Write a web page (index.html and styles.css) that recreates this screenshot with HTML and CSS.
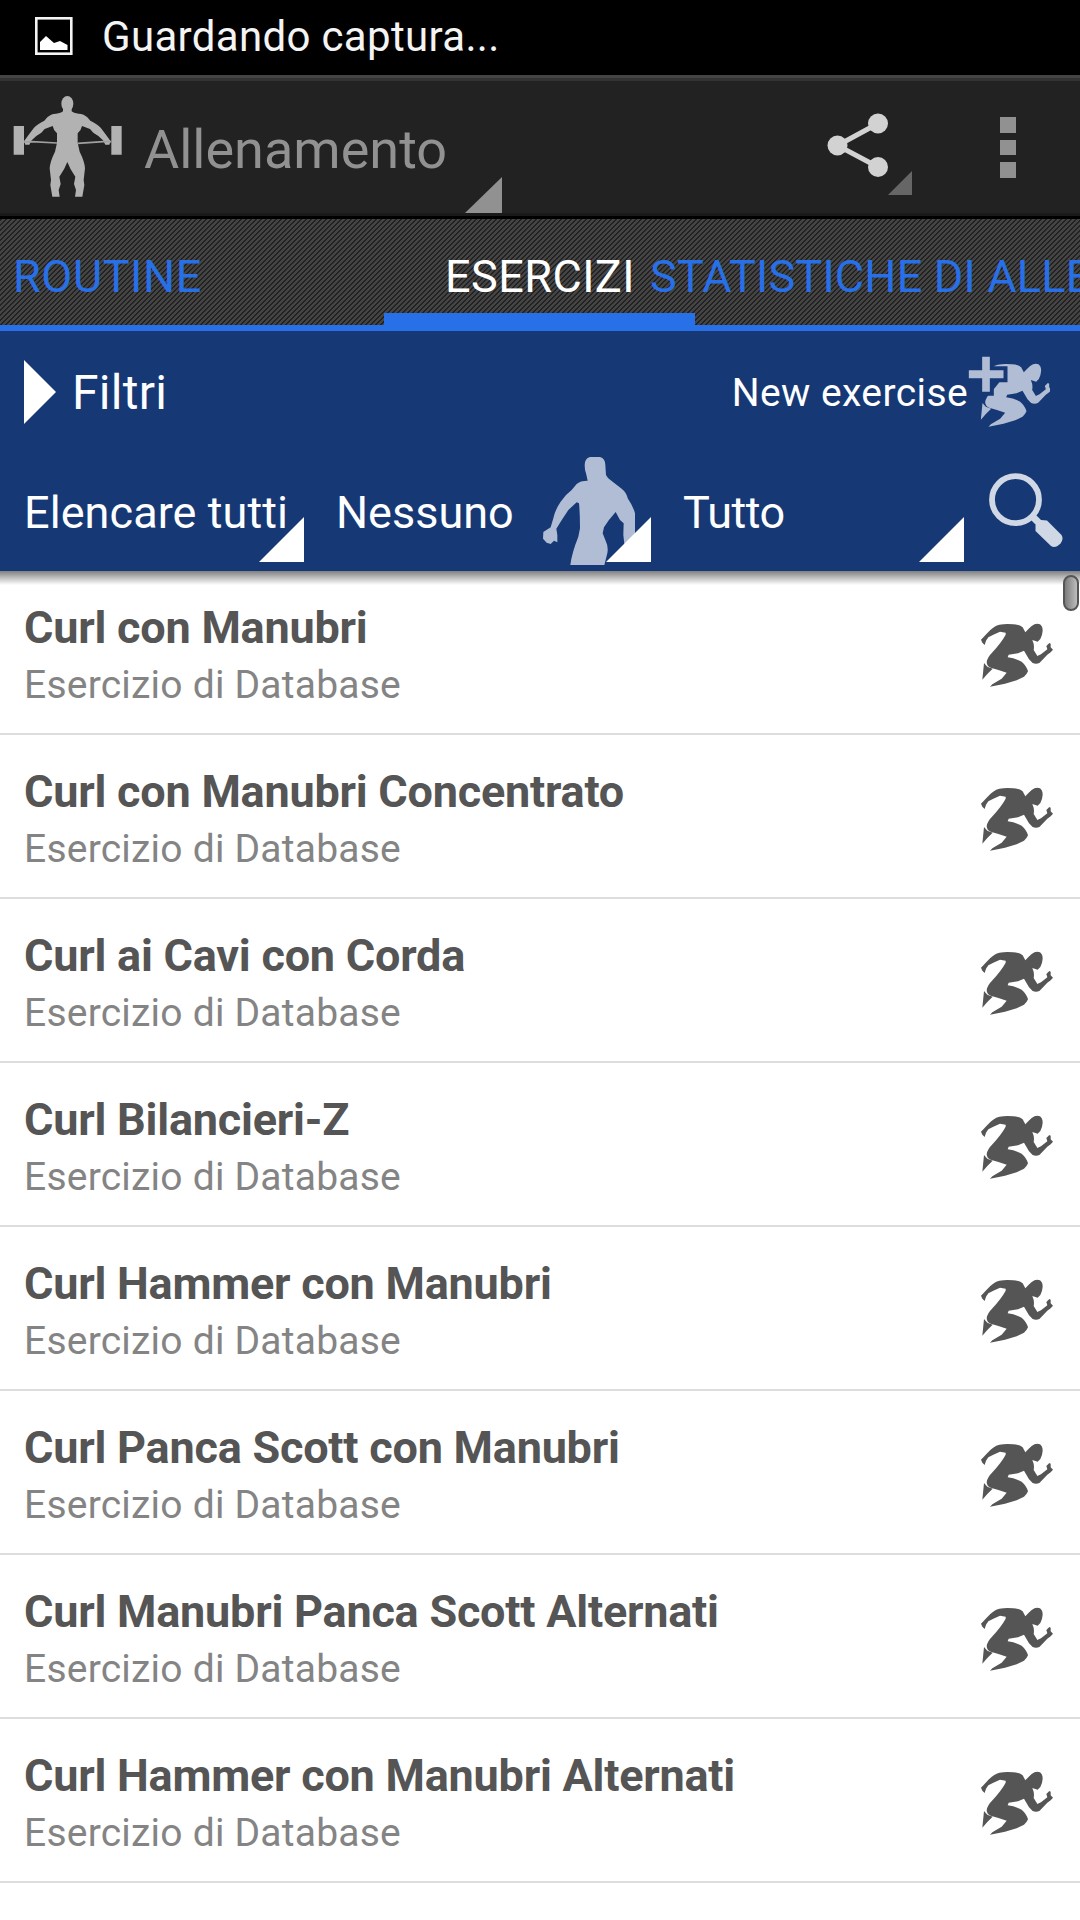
FILE: index.html
```html
<!DOCTYPE html>
<html lang="it">
<head>
<meta charset="utf-8">
<title>Allenamento</title>
<link rel="stylesheet" href="styles.css">
</head>
<body>
<svg class="defs" width="0" height="0">
  <defs>
    <symbol id="runner" viewBox="0 0 360 330">
      <path d="M63 119L73 109L80 101Q100 78 118 74Q140 70 160 73Q180 74 188 82L196 97Q208 84 215 78Q228 68 240 73Q248 79 248 92Q247 106 241 117L233 125L217 120Q224 135 221 150L229 163L232 168L243 163L262 148L259 138L268 129L272 131L272 142L279 149L272 157L262 164L239 188Q229 194 218 189L207 178L192 152L174 160L146 164L143 172Q170 176 185 185Q200 198 204 214Q201 222 192 230L170 241L135 251L90 260L97 253L125 236L140 218Q118 210 92 203Q80 198 80 186Q82 172 96 158Q124 128 137 104L137 98L120 95L100 104L85 112L78 122L74 135L67 128Z"/>
      <path d="M72 189L82 200L98 206L82 222L67 239Z"/>
    </symbol>
  </defs>
</svg>
<header class="status">
  <svg class="status-icon" viewBox="0 0 40 40" width="40" height="40"><rect x="2.3" y="2.3" width="35" height="35.4" fill="none" stroke="#f4f4f4" stroke-width="2.6"/><path d="M6 34V26L12 20L20 27L26 25L33.5 29V34Z" fill="#fff"/></svg>
  <span class="t-status">Guardando captura...</span>
</header>
<div class="actionbar">
  <svg class="logo" viewBox="0 0 420 390" width="140" height="130">
    <g fill="#b2b2b2">
      <ellipse cx="202" cy="71" rx="18" ry="23"/>
      <path d="M189 84V94Q184 99 168 101Q152 102 142 112L133 122Q112 132 102 143Q85 165 72 184L76 194L88 194L95 181Q110 165 124 158L134 147L158 138Q160 150 171 160V188L165 215Q150 245 149 265L153 300L151 315L157 350H179L176 330L182 312L178 290Q194 268 202 246Q210 268 226 290L222 312L228 330L225 350H247L253 315L251 300L255 265Q254 245 239 215L233 188V160Q244 150 246 138L270 147L280 158Q294 165 309 181L316 194L328 194L332 184Q319 165 302 143Q292 132 271 122L262 112Q252 102 236 101Q220 99 215 94V84Z"/>
      <path d="M41 138H72V224H41ZM334 138H365V224H334Z"/>
    </g>
    <path d="M72 186L95 185L171 189M233 190L310 185H334" fill="none" stroke="#a0a0a0" stroke-width="5"/>
  </svg>
  <div class="title"><span class="t-title">Allenamento</span><svg class="corner" viewBox="0 0 37 36" width="37" height="36"><path d="M37 0V36H0Z" fill="#919191"/></svg></div>
  <svg class="share" viewBox="0 0 90 90" width="90" height="90"><g fill="#d2d2d2"><circle cx="53" cy="23.500" r="10"/><circle cx="12.500" cy="45.500" r="10"/><circle cx="53" cy="67" r="10"/></g><path d="M53 23.500L12.500 45.500L53 67" fill="none" stroke="#d2d2d2" stroke-width="5"/><path d="M87 71V95H63Z" fill="#666"/></svg>
  <div class="overflow"><i></i><i></i><i></i></div>
</div>
<nav class="tabs">
  <span class="tab tab-routine">ROUTINE</span>
  <span class="tab tab-esercizi">ESERCIZI</span>
  <span class="tab tab-stat">STATISTICHE DI ALLENAMENTO</span>
</nav>
<section class="filters">
  <div class="filter-head">
    <svg viewBox="0 0 32 64" width="32" height="64"><path d="M0 0L32 32L0 64Z" fill="#fff"/></svg>
    <span class="t-filtri">Filtri</span>
    <span class="t-new">New exercise</span>
    <svg class="new-icon" viewBox="25 0 245 330" width="82" height="110"><use href="#runner" x="-4" y="0" width="360" height="330" fill="#b1bdd5"/><path d="M67 50H90V91H131V115H90V155H67V115H27V91H67Z" fill="#b1bdd5" stroke="#163975" stroke-width="24" paint-order="stroke"/></svg>
  </div>
  <div class="filter-row">
    <div class="spin spin-list"><span class="t-f t-list">Elencare tutti</span><svg class="tri" viewBox="0 0 45 45" width="45" height="45"><path d="M45 0V45H0Z" fill="#fff"/></svg></div>
    <span class="t-f t-none">Nessuno</span>
    <div class="spin spin-body"><svg viewBox="39 51 324 324" width="108" height="108"><path d="M180 51H210Q226 56 226 75L228 105Q232 115 245 123L275 146Q290 158 293 175Q310 200 315 220V300L284 320L280 285L281 250L270 240L257 216Q235 240 222 262L218 280L226 300Q236 320 232 340L223 375H121Q125 340 145 290L150 265Q150 220 147 190L140 187L115 210Q95 240 79 266L82 285V307L72 302L62 312L50 308L39 296L40 276L62 262L70 235Q75 210 92 185Q105 165 125 150L140 132Q150 122 173 122L168 100Q164 90 164 75Q164 56 180 51Z" fill="#b1bdd5"/></svg><svg class="tri" viewBox="0 0 45 45" width="45" height="45"><path d="M45 0V45H0Z" fill="#fff"/></svg></div>
    <div class="spin spin-all"><span class="t-f t-all">Tutto</span><svg class="tri" viewBox="0 0 45 45" width="45" height="45"><path d="M45 0V45H0Z" fill="#fff"/></svg></div>
    <svg class="search" viewBox="0 0 78 78" width="78" height="78"><circle cx="28.500" cy="27.700" r="23.500" fill="none" stroke="#d0d8e5" stroke-width="5.800"/><path d="M45 44L53 52" stroke="#d0d8e5" stroke-width="7"/><path d="M48.500 59V53L54 48L60 48.500L74.500 63Q77 67 73.500 71.500Q68 77 64 74Z" fill="#d0d8e5"/></svg>
  </div>
</section>
<main class="list">
  <div class="scrollbar"></div>
  <article class="row"><div><h2>Curl con Manubri</h2><p>Esercizio di Database</p></div><svg width="120" height="110"><use href="#runner"/></svg></article>
  <article class="row"><div><h2>Curl con Manubri Concentrato</h2><p>Esercizio di Database</p></div><svg width="120" height="110"><use href="#runner"/></svg></article>
  <article class="row"><div><h2>Curl ai Cavi con Corda</h2><p>Esercizio di Database</p></div><svg width="120" height="110"><use href="#runner"/></svg></article>
  <article class="row"><div><h2>Curl Bilancieri-Z</h2><p>Esercizio di Database</p></div><svg width="120" height="110"><use href="#runner"/></svg></article>
  <article class="row"><div><h2>Curl Hammer con Manubri</h2><p>Esercizio di Database</p></div><svg width="120" height="110"><use href="#runner"/></svg></article>
  <article class="row"><div><h2>Curl Panca Scott con Manubri</h2><p>Esercizio di Database</p></div><svg width="120" height="110"><use href="#runner"/></svg></article>
  <article class="row"><div><h2>Curl Manubri Panca Scott Alternati</h2><p>Esercizio di Database</p></div><svg width="120" height="110"><use href="#runner"/></svg></article>
  <article class="row"><div><h2>Curl Hammer con Manubri Alternati</h2><p>Esercizio di Database</p></div><svg width="120" height="110"><use href="#runner"/></svg></article>
</main>
</body>
</html>
```
FILE: styles.css
```css
* { box-sizing: border-box; }
body { margin: 0; width: 1080px; height: 1920px; overflow: hidden; background: #fff; font-family: Roboto, sans-serif; color: #fff; }
svg { display: block; flex: none; }
.defs { position: absolute; }
span, h2, p { white-space: nowrap; }

.status { display: flex; align-items: center; height: 75px; padding: 0 0 3px 34px; background: #000; }
.t-status { margin: 2px 0 0 28px; font-size: 42px; line-height: 48px; letter-spacing: .33px; color: #f4f4f4; }

.actionbar { display: flex; height: 144px; background: #222; border-top: 3px solid #444; border-bottom: 3px solid #000; box-shadow: inset 0 3px #333, inset 0 -3px #1a1a1a; }
.logo { margin-top: 2px; }
.title { position: relative; width: 362px; padding: 40px 0 0 4px; }
.t-title { font-size: 54px; line-height: 64px; color: #919191; }
.corner { position: absolute; right: 0; bottom: 3px; }
.share { margin: 22px 0 0 323px; overflow: visible; }
.overflow { display: flex; flex-direction: column; gap: 7px; margin: 39px 0 0 85px; }
.overflow i { width: 16px; height: 15.500px; background: #919191; }

.tabs { display: flex; height: 112px; overflow: hidden; border-bottom: 6px solid #2770e7; background: repeating-linear-gradient(135deg, #222 0 1.800px, #444 1.800px 3.536px); }
.tab { padding-top: 31px; line-height: 54px; font-size: 45px; color: #2770e7; flex: none; }
.tab-routine { width: 384px; padding-left: 13px; letter-spacing: .6px; }
.tab-esercizi { width: 311px; padding-left: 61px; letter-spacing: .45px; color: #fff; border-bottom: 12px solid #2770e7; }
.tab-stat { margin-left: -45px; letter-spacing: .2px; }

.filters { height: 240px; background: #163975; }
.filter-head { display: flex; align-items: center; height: 121px; padding: 0 30px 0 24px; }
.t-filtri { margin: 1px 0 0 16px; font-size: 48px; letter-spacing: .3px; }
.t-new { margin: 2px 0 0 auto; font-size: 39px; letter-spacing: .4px; }
.new-icon { margin-top: 7px; }
.filter-row { display: flex; height: 119px; padding-left: 24px; }
.t-f { font-size: 45px; line-height: 54px; padding-top: 34px; }
.spin { position: relative; display: flex; height: 110px; }
.tri { position: absolute; right: 0; bottom: 0; }
.spin-list { width: 280px; }
.t-list { letter-spacing: .07px; }
.t-none { width: 207px; margin-left: 32px; }
.spin-body { width: 108px; padding-top: 5px; }
.spin-all { width: 281px; margin-left: 32px; }
.t-all { letter-spacing: -.5px; }
.search { margin: 20px 0 0 23px; }

.list { position: relative; background: #fff; }
.list::before { content: ""; position: absolute; top: 0; left: 0; width: 100%; height: 14px; background: linear-gradient(#808080, #c0c0c0 50%, #fff); }
.row { display: flex; justify-content: space-between; height: 164px; padding: 30px 0 0 24px; border-bottom: 2px solid #ddd; fill: #555; }
.row svg { margin-top: -1px; }
h2 { margin: 0; font-size: 45px; line-height: 54px; font-weight: 700; letter-spacing: -.23px; color: #555; }
p { margin: 6px 0 0; font-size: 39px; line-height: 48px; letter-spacing: .22px; color: #848484; }
.scrollbar { position: absolute; top: 4px; right: 1px; width: 16px; height: 36px; border: 2.500px solid #555; border-radius: 8px; background: linear-gradient(90deg, #7c7c7c, #bdbdbd); }
```
